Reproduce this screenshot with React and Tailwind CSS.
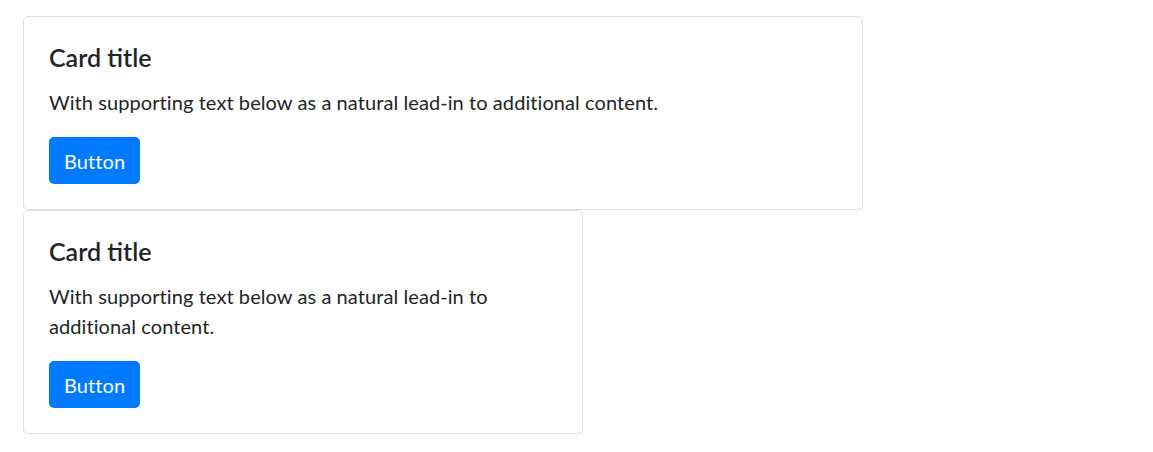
function Card({ width }) {
  return (
    <div
      className={`${width} rounded-[5px] border border-[#dfdfdf] bg-white p-[25px]`}
    >
      <h5 className="mb-[15px] text-[25px] font-semibold leading-[30px] text-[#212529]">
        Card title
      </h5>
      <p className="mb-[20px] text-[20px] leading-[30px] tracking-[0.08px] text-[#212529]">
        With supporting text below as a natural lead-in to additional content.
      </p>
      <button
        type="button"
        className="h-[47px] rounded-[5px] bg-[#007bff] px-[15px] text-[20px] leading-[30px] tracking-[0.1px] text-white"
      >
        Button
      </button>
    </div>
  )
}

export default function App() {
  return (
    <div className="min-h-[452px] bg-white pl-[23px] pt-[16px] font-['Lato',sans-serif]">
      <Card width="w-[840px]" />
      <Card width="w-[560px]" />
    </div>
  )
}
